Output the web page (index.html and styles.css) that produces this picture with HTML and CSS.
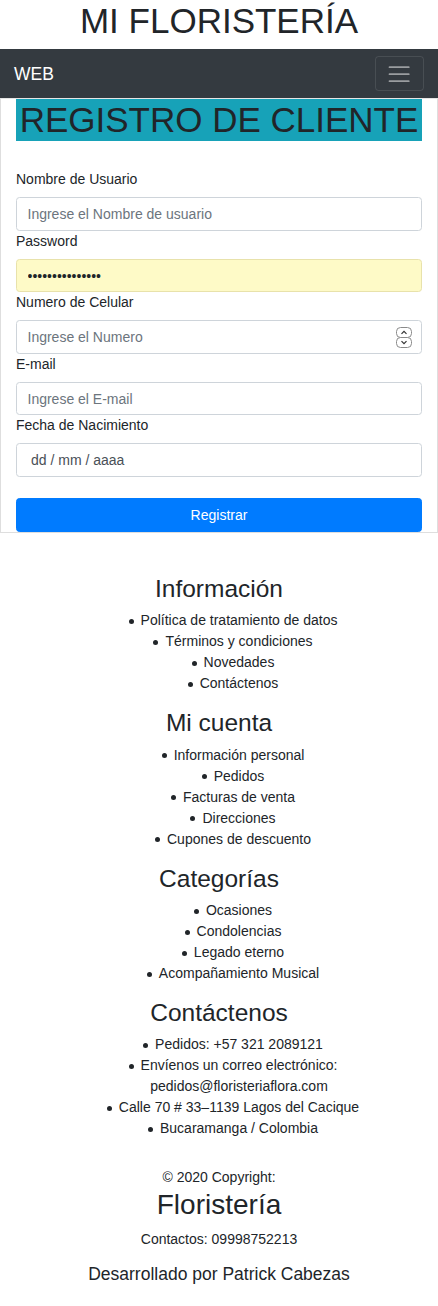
FILE: index.html
```html
<!DOCTYPE html>
<html lang="es">
<head>
<meta charset="utf-8">
<title>Mi Floristería</title>
<link rel="stylesheet" href="styles.css">
</head>
<body>
<h1 class="site-title">MI FLORISTERÍA</h1>
<nav class="navbar">
  <a class="brand" href="#">WEB</a>
  <button class="toggler" type="button" aria-label="Menú">
    <svg class="toggler-icon" viewBox="0 0 30 30" aria-hidden="true">
      <path d="M4 7h22M4 15h22M4 23h22" stroke="rgba(255,255,255,0.5)" stroke-width="2" stroke-linecap="round" fill="none"/>
    </svg>
  </button>
</nav>
<main class="register">
  <h1 class="register-title">REGISTRO DE CLIENTE</h1>
  <form class="form">
    <label class="label" for="u">Nombre de Usuario</label>
    <input class="control" id="u" type="text" placeholder="Ingrese el Nombre de usuario">
    <label class="label" for="p">Password</label>
    <input class="control control-autofill" id="p" type="password" value="aaaaaaaaaaaaaaa">
    <label class="label" for="n">Numero de Celular</label>
    <div class="number-wrap">
      <input class="control" id="n" type="text" placeholder="Ingrese el Numero">
      <svg class="spinner" viewBox="0 0 16 21" aria-hidden="true">
        <rect x="0.5" y="0.5" width="15" height="10" rx="4" fill="#fff" stroke="#8a8a8a"/>
        <rect x="0.5" y="10.5" width="15" height="10" rx="4" fill="#fff" stroke="#8a8a8a"/>
        <path d="M5.5 6.8 L8 4.3 L10.5 6.8" stroke="#333" stroke-width="1.2" fill="none"/>
        <path d="M5.5 14.2 L8 16.7 L10.5 14.2" stroke="#333" stroke-width="1.2" fill="none"/>
      </svg>
    </div>
    <label class="label" for="e">E-mail</label>
    <input class="control" id="e" type="text" placeholder="Ingrese el E-mail">
    <label class="label" for="f">Fecha de Nacimiento</label>
    <input class="control control-date" id="f" type="text" value="dd / mm / aaaa">
    <button class="btn-submit" type="submit">Registrar</button>
  </form>
</main>
<footer class="footer">
  <section class="footer-section">
    <h3 class="footer-title">Información</h3>
    <ul class="footer-list">
      <li>Política de tratamiento de datos</li>
      <li>Términos y condiciones</li>
      <li>Novedades</li>
      <li>Contáctenos</li>
    </ul>
  </section>
  <section class="footer-section">
    <h3 class="footer-title">Mi cuenta</h3>
    <ul class="footer-list">
      <li>Información personal</li>
      <li>Pedidos</li>
      <li>Facturas de venta</li>
      <li>Direcciones</li>
      <li>Cupones de descuento</li>
    </ul>
  </section>
  <section class="footer-section">
    <h3 class="footer-title">Categorías</h3>
    <ul class="footer-list">
      <li>Ocasiones</li>
      <li>Condolencias</li>
      <li>Legado eterno</li>
      <li>Acompañamiento Musical</li>
    </ul>
  </section>
  <section class="footer-section">
    <h3 class="footer-title">Contáctenos</h3>
    <ul class="footer-list">
      <li>Pedidos: +57 321 2089121</li>
      <li>Envíenos un correo electrónico: pedidos@floristeriaflora.com</li>
      <li>Calle 70 # 33–1139 Lagos del Cacique</li>
      <li>Bucaramanga / Colombia</li>
    </ul>
  </section>
  <div class="copyright">
    <div class="copy-line">© 2020 Copyright:</div>
    <h2 class="copy-brand">Floristería</h2>
    <p class="copy-contact">Contactos: 09998752213</p>
    <h5 class="copy-author">Desarrollado por Patrick Cabezas</h5>
  </div>
</footer>
</body>
</html>
```
FILE: styles.css
```css
* { box-sizing: border-box; }

html { font-size: 14px; }

body {
  margin: 0;
  font-family: "Liberation Sans", Arial, sans-serif;
  font-size: 14px;
  line-height: 1.5;
  color: #212529;
  background: #fff;
}

h1, h2, h3, h5 {
  margin: 0 0 7px;
  font-weight: 500;
  line-height: 1.2;
}

.site-title {
  font-size: 35px;
  text-align: center;
}

.navbar {
  display: flex;
  align-items: center;
  justify-content: space-between;
  padding: 7px 14px;
  background: #343a40;
}

.brand {
  color: #fff;
  text-decoration: none;
  font-size: 17.5px;
  line-height: 26.25px;
  padding: 4.375px 0;
}

.toggler {
  display: flex;
  align-items: center;
  justify-content: center;
  width: 49.25px;
  height: 35.25px;
  padding: 0;
  background: transparent;
  border: 1px solid rgba(255, 255, 255, 0.1);
  border-radius: 3.5px;
}

.toggler-icon {
  width: 26.25px;
  height: 26.25px;
  display: block;
}

.register {
  border: 1px solid rgba(0, 0, 0, 0.125);
  border-top-color: #e5e5e5;
  padding: 0 15px;
}

.register-title {
  font-size: 35px;
  background: #17a2b8;
  color: #212529;
  text-align: center;
  margin-bottom: 7px;
}

.form {
  padding-top: 21px;
}

.label {
  display: block;
  margin-bottom: 7px;
  line-height: 21px;
}

.control {
  display: block;
  width: 100%;
  height: 33.5px;
  padding: 5.25px 10.5px;
  font-family: inherit;
  font-size: 14px;
  line-height: 21px;
  color: #495057;
  background: #fff;
  border: 1px solid #ced4da;
  border-radius: 3.5px;
  outline: none;
}

.control::placeholder {
  color: #6c757d;
  opacity: 1;
}

.control-autofill {
  background: #fefac7;
  border-color: #e8e2ab;
  color: #212529;
}

.control-date {
  padding-left: 14px;
  color: #495057;
}

.number-wrap {
  position: relative;
}

.spinner {
  position: absolute;
  right: 10px;
  top: 6.5px;
  width: 16px;
  height: 21px;
}

.btn-submit {
  display: block;
  width: 100%;
  height: 33.5px;
  margin-top: 21.5px;
  padding: 5.25px 10.5px;
  font-family: inherit;
  font-size: 14px;
  line-height: 21px;
  color: #fff;
  background: #007bff;
  border: 1px solid #007bff;
  border-radius: 3.5px;
}

.footer {
  padding: 41px 15px 0;
  text-align: center;
}

.footer-title {
  font-size: 24.5px;
}

.footer-list {
  margin: 0 0 14px;
  padding-left: 40px;
  list-style: none;
}

.footer-list li::before {
  content: "";
  display: inline-block;
  width: 5px;
  height: 5px;
  margin-left: -12px;
  margin-right: 7px;
  border-radius: 50%;
  background: currentColor;
  vertical-align: 0.1em;
}

.copyright {
  padding-top: 14px;
}

.copy-line {
  line-height: 21px;
}

.copy-brand {
  font-size: 28px;
}

.copy-contact {
  margin: 0 0 14px;
}

.copy-author {
  font-size: 17.5px;
}
```
